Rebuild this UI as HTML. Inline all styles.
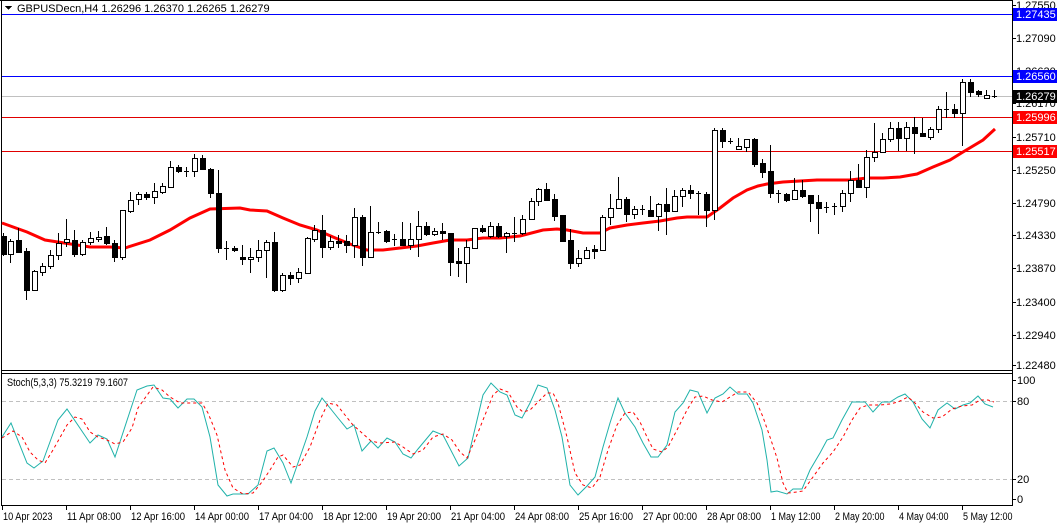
<!DOCTYPE html>
<html><head><meta charset="utf-8">
<style>
html,body{margin:0;padding:0;background:#fff;width:1057px;height:525px;overflow:hidden}
svg{display:block;font-family:"Liberation Sans",Tahoma,sans-serif;font-size:11px}
</style></head><body>
<svg id="s" width="1057" height="525" xmlns="http://www.w3.org/2000/svg" shape-rendering="crispEdges"></svg>
<script>
var C=[[3,236,254,233,256,'b'],[10,241,254,239,263,'w'],[18,240,252,228,252,'b'],[26,251,290,248,300,'b'],[34,271,290,270,291,'w'],[42,266,272,263,276,'w'],[50,255,266,250,269,'w'],[58,243,255,233,260,'w'],[66,239,242,219,247,'w'],[74,240,254,230,257,'b'],[82,242,254,240,256,'w'],[90,238,242,232,245,'w'],[98,237,239,231,242,'w'],[106,236,243,227,245,'b'],[114,243,257,240,262,'b'],[122,210,257,210,260,'w'],[130,200,211,192,213,'w'],[138,194,199,192,205,'w'],[146,194,197,192,200,'b'],[154,191,197,183,204,'w'],[162,186,192,183,194,'w'],[170,167,187,161,188,'w'],[178,167,171,165,173,'b'],[186,171,171,167,177,'c'],[194,158,171,154,177,'w'],[202,158,169,155,170,'b'],[210,169,193,168,198,'b'],[218,193,248,170,253,'b'],[226,248,248,241,260,'c'],[234,248,250,246,252,'b'],[242,257,259,245,265,'b'],[250,257,259,248,273,'w'],[258,250,257,240,262,'w'],[266,242,250,240,278,'w'],[274,242,290,232,292,'b'],[282,275,290,273,292,'w'],[290,275,278,272,285,'b'],[298,272,278,268,283,'w'],[307,238,273,237,274,'w'],[314,230,239,225,242,'w'],[322,230,247,215,258,'b'],[330,241,247,236,250,'w'],[338,241,243,235,248,'b'],[346,241,245,235,253,'b'],[354,217,245,208,258,'w'],[362,217,257,215,266,'b'],[370,232,257,206,258,'w'],[378,232,232,222,234,'c'],[386,231,241,230,243,'b'],[394,239,239,234,246,'c'],[402,239,245,222,246,'b'],[410,239,245,223,250,'w'],[418,226,239,211,257,'w'],[426,226,234,222,236,'b'],[434,231,234,228,236,'w'],[442,231,233,223,240,'b'],[450,233,262,233,276,'b'],[458,261,263,248,277,'b'],[466,247,263,240,283,'w'],[474,228,248,228,249,'w'],[482,228,231,225,233,'b'],[490,226,236,222,238,'w'],[498,226,236,223,238,'b'],[506,233,236,232,253,'w'],[514,233,233,217,242,'c'],[522,219,233,215,235,'w'],[531,201,219,198,220,'w'],[538,189,201,188,206,'w'],[546,189,200,183,201,'b'],[554,199,216,194,221,'b'],[562,215,241,215,242,'b'],[570,240,263,229,269,'b'],[578,258,263,250,267,'w'],[586,250,258,247,259,'w'],[594,249,250,245,259,'b'],[602,217,250,215,251,'w'],[610,208,217,194,225,'w'],[618,199,208,177,209,'w'],[626,199,214,197,222,'b'],[634,209,214,206,219,'w'],[642,209,209,205,215,'c'],[650,210,216,196,217,'b'],[658,204,216,203,231,'w'],[666,204,211,188,235,'b'],[674,196,211,190,212,'w'],[682,190,196,188,207,'w'],[690,190,193,185,199,'b'],[698,193,193,191,215,'c'],[706,194,210,192,227,'b'],[714,130,210,128,220,'w'],[722,130,141,128,148,'b'],[730,141,141,138,144,'c'],[738,146,149,138,150,'w'],[746,139,147,139,152,'w'],[754,139,164,138,167,'b'],[762,163,172,159,178,'b'],[770,171,193,145,198,'b'],[778,193,193,190,203,'c'],[786,194,200,193,202,'b'],[794,190,199,178,200,'w'],[802,190,196,180,198,'b'],[810,195,203,195,222,'b'],[818,202,208,195,234,'b'],[826,207,207,202,213,'c'],[834,206,206,203,215,'c'],[842,193,206,190,212,'w'],[850,180,193,171,202,'w'],[858,180,187,164,188,'b'],[866,157,187,150,198,'w'],[874,152,157,123,162,'w'],[882,139,152,133,153,'w'],[890,128,139,122,142,'w'],[898,128,138,122,151,'b'],[906,127,138,122,151,'w'],[914,127,133,117,154,'b'],[922,133,136,118,137,'b'],[930,129,137,127,140,'w'],[938,109,129,106,133,'w'],[946,109,109,92,118,'c'],[954,109,113,104,118,'b'],[962,82,113,79,146,'w'],[970,82,92,79,97,'b'],[978,91,94,90,97,'b'],[986,95,98,90,99,'w'],[994,96,96,90,98,'c']];
var MA="2,223 27,232 45,240 90,247 110,247 125,248 150,240 170,230 190,218 210,209 240,208 250,210 267,211 283,218 300,225 317,230 333,237 350,244 367,250 383,250 400,248 417,246 433,243 450,240 467,240 483,238 500,238 520,236 543,230 557,229 567,230 583,233 600,233 610,228 627,225 643,223 660,221 677,218 687,217 700,217 707,217 720,208 733,198 747,190 758,186 767,184 783,182 817,180 850,180 867,178 883,178 900,177 917,174 933,167 950,160 963,152 983,140 995,129";
var K="2,437 11,423 27,463 34,468 43,461 58,420 67,409 90,443 98,435 107,439 115,457 137,390 147,386 154,385 163,398 170,399 178,408 187,399 194,399 202,407 210,437 218,485 227,496 233,494 248,494 258,485 267,451 274,448 283,463 291,483 307,437 315,411 322,398 338,418 347,429 354,425 362,451 371,441 378,448 387,438 395,442 403,454 411,458 418,449 433,431 443,435 459,466 468,458 483,395 491,383 500,392 507,395 515,415 522,418 530,403 538,385 547,388 555,410 562,437 570,485 578,495 587,486 595,477 603,447 610,423 618,398 625,413 635,427 643,443 651,457 658,457 667,445 675,412 683,403 690,390 698,392 707,413 715,398 723,394 730,387 738,394 747,394 753,403 762,430 767,460 771,492 777,491 787,494 793,489 802,489 810,470 820,453 827,440 833,438 842,420 852,402 865,402 873,412 882,402 890,402 898,397 905,394 913,402 922,419 930,428 938,410 947,403 955,409 963,405 970,403 978,396 985,404 993,407";
var D="2,438 13,431 22,437 30,452 38,460 45,463 53,450 67,425 75,417 82,419 90,432 98,437 107,440 115,444 123,442 132,428 138,408 145,398 153,387 162,390 170,397 180,403 193,403 202,403 208,413 217,435 225,470 233,488 243,494 253,493 262,482 270,470 278,457 283,455 293,467 300,465 310,447 320,420 328,403 337,405 345,415 353,425 362,433 371,441 380,443 395,442 403,447 413,454 423,450 433,437 443,434 452,440 460,452 467,458 475,440 487,410 493,395 500,389 508,392 517,407 523,412 530,410 538,402 547,393 553,393 558,403 567,437 575,473 583,485 592,488 600,477 608,450 617,425 625,413 633,412 640,422 647,437 653,449 662,452 668,447 677,430 687,410 695,397 703,396 712,400 722,402 730,397 738,392 748,392 757,403 763,417 770,437 777,458 783,483 788,493 797,492 803,491 813,477 823,463 833,452 843,437 852,420 860,408 868,405 880,405 890,404 898,402 908,397 915,403 923,412 933,418 942,417 952,409 962,406 972,405 980,400 988,400 994,402";
var h='';
h+='<rect x="0" y="0" width="1057" height="525" fill="#fff"/>';
h+='<line x1="1.5" y1="0" x2="1.5" y2="506" stroke="#000"/>';
h+='<line x1="0" y1="0.5" x2="1013" y2="0.5" stroke="#000"/>';
h+='<line x1="1012.5" y1="0" x2="1012.5" y2="506" stroke="#000"/>';
h+='<line x1="1" y1="370.5" x2="1013" y2="370.5" stroke="#000"/>';
h+='<line x1="1" y1="373.5" x2="1013" y2="373.5" stroke="#000"/>';
h+='<line x1="1" y1="505.5" x2="1013" y2="505.5" stroke="#000"/>';
h+='<line x1="2" y1="14.5" x2="1012" y2="14.5" stroke="#0000ff"/>';
h+='<line x1="2" y1="76.5" x2="1012" y2="76.5" stroke="#0000ff"/>';
h+='<line x1="2" y1="96.5" x2="1012" y2="96.5" stroke="#c0c0c0"/>';
h+='<line x1="2" y1="117.5" x2="1012" y2="117.5" stroke="#e00000"/>';
h+='<line x1="2" y1="151.5" x2="1012" y2="151.5" stroke="#e00000"/>';
h+='<line x1="2" y1="401.5" x2="1012" y2="401.5" stroke="#c0c0c0" stroke-dasharray="4,3"/>';
h+='<line x1="2" y1="479.5" x2="1012" y2="479.5" stroke="#c0c0c0" stroke-dasharray="4,3"/>';
h+='<polyline points="'+MA+'" fill="none" stroke="#ff0000" stroke-width="3" shape-rendering="auto"/>';
C.forEach(function(c){var x=c[0];
 h+='<line x1="'+(x+.5)+'" y1="'+c[3]+'" x2="'+(x+.5)+'" y2="'+c[4]+'" stroke="#000"/>';
 if(c[5]=='c'){h+='<line x1="'+(x-2)+'" y1="'+(c[1]+.5)+'" x2="'+(x+3)+'" y2="'+(c[1]+.5)+'" stroke="#000"/>';}
 else{var hh=Math.max(c[2]-c[1],2);h+='<rect x="'+(x-2+.5)+'" y="'+(c[1]+.5)+'" width="5" height="'+hh+'" fill="'+(c[5]=='b'?'#000':'#fff')+'" stroke="#000"/>';}
});
h+='<polyline points="'+K+'" fill="none" stroke="#20b2aa" stroke-width="1" shape-rendering="auto"/>';
h+='<polyline points="'+D+'" fill="none" stroke="#ff0000" stroke-width="1" stroke-dasharray="3,3" shape-rendering="auto"/>';
h+='<path d="M5,6 L12,6 L8.5,10 Z" fill="#000"/>';
h+='<text x="17" y="12">GBPUSDecn,H4  1.26296 1.26370 1.26265 1.26279</text>';
h+='<text x="7" y="386" textLength="121" lengthAdjust="spacingAndGlyphs">Stoch(5,3,3) 75.3219 79.1607</text>';
var P=[[5,'1.27550'],[38,'1.27090'],[71,'1.26630'],[103,'1.26170'],[137,'1.25710'],[170,'1.25250'],[203,'1.24790'],[235,'1.24330'],[268,'1.23870'],[302,'1.23400'],[335,'1.22940'],[365,'1.22480']];
P.forEach(function(p){h+='<line x1="1012" y1="'+(p[0]+.5)+'" x2="1016" y2="'+(p[0]+.5)+'" stroke="#000"/><text x="1016" y="'+(p[0]+4)+'">'+p[1]+'</text>';});
var L=[[14,'#0000ff','1.27435'],[76,'#0000ff','1.26560'],[96,'#000','1.26279'],[117,'#ff0000','1.25996'],[151,'#ff0000','1.25517']];
L.forEach(function(l){h+='<rect x="1013" y="'+(l[0]-6)+'" width="44" height="13" fill="'+l[1]+'"/><text x="1016" y="'+(l[0]+4)+'" fill="#fff">'+l[2]+'</text>';});
[[380,'100'],[401,'80'],[479,'20'],[499,'0']].forEach(function(s){h+='<line x1="1012" y1="'+(s[0]+.5)+'" x2="1016" y2="'+(s[0]+.5)+'" stroke="#000"/><text x="1017" y="'+(s[0]+4)+'">'+s[1]+'</text>';});
var T=['10 Apr 2023','11 Apr 08:00','12 Apr 16:00','14 Apr 00:00','17 Apr 04:00','18 Apr 12:00','19 Apr 20:00','21 Apr 04:00','24 Apr 08:00','25 Apr 16:00','27 Apr 00:00','28 Apr 08:00','1 May 12:00','2 May 20:00','4 May 04:00','5 May 12:00'];
T.forEach(function(t,i){var x=2+64*i;h+='<line x1="'+(x+.5)+'" y1="505" x2="'+(x+.5)+'" y2="510" stroke="#000"/><text x="'+(x+1)+'" y="520" textLength="'+(t.length*4.5)+'" lengthAdjust="spacingAndGlyphs">'+t+'</text>';});
document.getElementById('s').innerHTML=h;
</script>
</body></html>
